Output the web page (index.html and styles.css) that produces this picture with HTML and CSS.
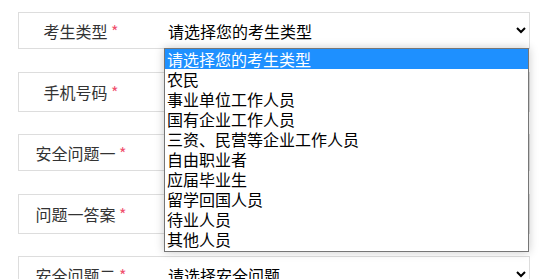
FILE: index.html
```html
<!DOCTYPE html>
<html lang="zh-CN">
<head>
    <meta charset="UTF-8">
    <meta name="viewport" content="width=device-width, initial-scale=1.0">
    <title>考生注册</title>
    <link rel="stylesheet" href="styles.css">
</head>
<body>
    <div class="container">
        <form action="">
            <div class="row">
                <label class="label" for="type">考生类型 <span class="star">*</span></label>
                <div class="field">
                    <select name="type" id="type" class="select">
                        <option>请选择您的考生类型</option>
                    </select>
                    <!-- open list of the select -->
                    <ul class="options">
                        <li class="option active">请选择您的考生类型</li>
                        <li class="option">农民</li>
                        <li class="option">事业单位工作人员</li>
                        <li class="option">国有企业工作人员</li>
                        <li class="option">三资、民营等企业工作人员</li>
                        <li class="option">自由职业者</li>
                        <li class="option">应届毕业生</li>
                        <li class="option">留学回国人员</li>
                        <li class="option">待业人员</li>
                        <li class="option">其他人员</li>
                    </ul>
                </div>
            </div>

            <div class="row tall">
                <label class="label" for="phone">手机号码 <span class="star">*</span></label>
                <div class="field">
                    <input type="text" name="phone" id="phone" class="input">
                </div>
            </div>

            <div class="row">
                <label class="label" for="q1">安全问题一 <span class="star">*</span></label>
                <div class="field">
                    <select name="q1" id="q1" class="select">
                        <option>请选择安全问题</option>
                    </select>
                </div>
            </div>

            <div class="row tall">
                <label class="label" for="a1">问题一答案 <span class="star">*</span></label>
                <div class="field">
                    <input type="text" name="a1" id="a1" class="input">
                </div>
            </div>

            <div class="row">
                <label class="label" for="q2">安全问题二 <span class="star">*</span></label>
                <div class="field">
                    <select name="q2" id="q2" class="select">
                        <option>请选择安全问题</option>
                    </select>
                </div>
            </div>
        </form>
    </div>
</body>
</html>
```

FILE: styles.css
```css
html{
    overflow: hidden;
}

body{
    margin: 0;
    background: #fff;
    font-family: "Noto Sans CJK SC", "Noto Sans", sans-serif;
    font-size: 16px;
    color: #000;
}

.container{
    padding: 12px 19px 0 18px;
}

.row{
    display: flex;
    align-items: center;
    height: 37px;
    box-sizing: border-box;
    border: 1px solid #ddd;
    margin-bottom: 22.5px;
    background: #fff;
}

.row.tall{
    height: 40px;
}

.label{
    width: 124px;
    margin-right: 21px;
    text-align: center;
    color: #333;
    line-height: 20px;
}

.star{
    color: #f0506e;
}

.field{
    position: relative;
    flex: 1;
    height: 100%;
}

.select{
    width: 100%;
    height: 100%;
    border: none;
    outline: none;
    background: #fff;
    font-family: inherit;
    font-size: 16px;
    color: #000;
    padding: 0;
}

.input{
    width: 100%;
    height: 100%;
    box-sizing: border-box;
    border: none;
    outline: none;
    font-family: inherit;
    font-size: 16px;
    padding: 0 4px;
}

.options{
    position: absolute;
    left: 0;
    top: 100%;
    width: 100%;
    box-sizing: border-box;
    margin: 0;
    padding: 0 0 2px 0;
    list-style: none;
    background: #fff;
    border: 1px solid #767676;
    box-shadow: 0 0 9px rgba(0, 0, 0, 0.22);
    z-index: 5;
}

.option{
    height: 20px;
    line-height: 20px;
    padding-left: 2px;
    white-space: nowrap;
}

.option.active{
    background: #1e90ff;
    color: #fff;
}
```
